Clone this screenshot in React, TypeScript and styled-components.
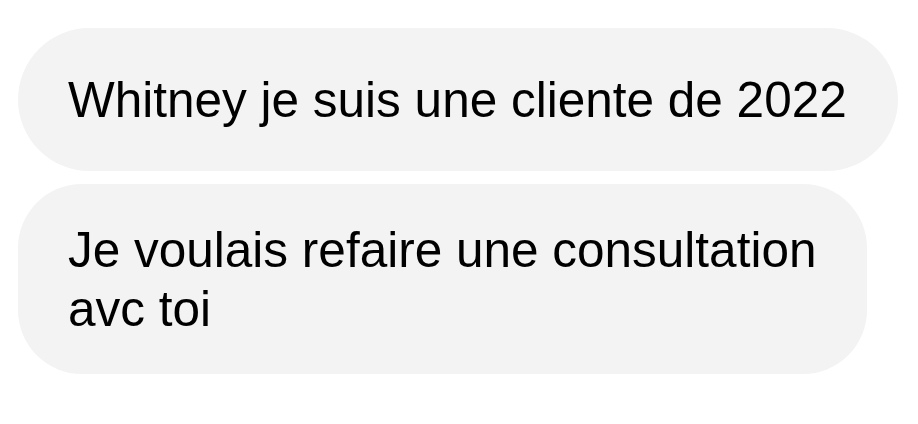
import React from 'react'
import styled, { createGlobalStyle } from 'styled-components'

const GlobalStyle = createGlobalStyle`
  html, body {
    margin: 0;
    padding: 0;
    background: #ffffff;
  }
  body {
    font-family: 'Liberation Sans', Arial, sans-serif;
  }
`

interface Message {
  id: number
  lines: string[]
  padY: number
}

const messages: Message[] = [
  { id: 1, lines: ['Whitney je suis une cliente de 2022'], padY: 42 },
  { id: 2, lines: ['Je voulais refaire une consultation', 'avc toi'], padY: 36 },
]

const App: React.FC = () => {
  return (
    <>
      <GlobalStyle />
      <Thread>
        {messages.map((m) => (
          <Bubble key={m.id} padY={m.padY} round={m.lines.length === 1}>
            {m.lines.map((line, i) => (
              <Line key={i}>{line}</Line>
            ))}
          </Bubble>
        ))}
      </Thread>
    </>
  )
}

export default App

const Thread = styled.div`
  display: flex;
  flex-direction: column;
  align-items: flex-start;
  gap: 13px;
  padding: 28px 0 0 18px;
  width: 918px;
  height: 424px;
  box-sizing: border-box;
`

const Bubble = styled.div<{ padY: number; round: boolean }>`
  display: flex;
  flex-direction: column;
  padding: ${({ padY }) => padY}px 51px ${({ padY }) => padY}px 50px;
  background: #f3f3f3;
  border-radius: ${({ round }) => (round ? '72px' : '64px')};
  color: #000000;
`

const Line = styled.span`
  font-size: 49.5px;
  line-height: 59px;
  white-space: nowrap;
`
